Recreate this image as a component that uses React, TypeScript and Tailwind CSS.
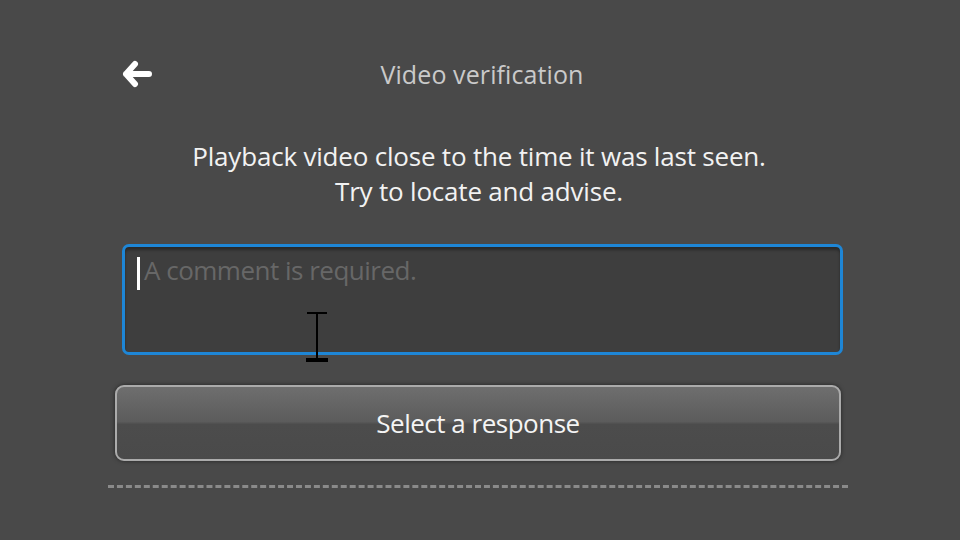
import { useState } from 'react';

function BackArrow() {
    return (
        <svg width="32" height="28" viewBox="0 0 32 28" fill="none">
            <path
                d="M14 4 L5 14 L14 24 M5 14 H28"
                stroke="#ffffff"
                strokeWidth="6"
                strokeLinecap="round"
                strokeLinejoin="round"
            />
        </svg>
    )
}

function IBeam() {
    return (
        <svg width="28" height="54" viewBox="0 0 28 54" className="absolute left-[303px] top-[310px] pointer-events-none">
            <path d="M4 3 H24 M14 3 V50" stroke="#000" strokeWidth="2" />
            <path d="M3 50 H25" stroke="#000" strokeWidth="4" />
        </svg>
    )
}

export default function App() {
    const [comment, setComment] = useState('')

    return (
        <div className="relative w-[960px] h-[540px] bg-[#494949] font-['Open_Sans',sans-serif] overflow-hidden">
            <div className="flex items-center h-[30px] mt-[59px] ml-[121px] w-[720px]">
                <button className="w-[32px] h-[28px] flex items-center justify-center">
                    <BackArrow />
                </button>
                <h1 className="flex-1 text-center text-[25px] leading-[30px] text-[#cacaca] pr-[30px] tracking-[0.1px]">Video verification</h1>
            </div>

            <p className="mt-[50px] text-center text-[26px] leading-[35px] text-[#f2f2f2] tracking-[-0.2px] pr-[2px]">
                Playback video close to the time it was last seen.<br />
                Try to locate and advise.
            </p>

            <div className="mt-[35px] ml-[122px] w-[721px] h-[111px] rounded-[7px] border-[3px] border-[#1e86d6] bg-[#3e3e3e] shadow-[inset_0_3px_3px_rgba(0,0,0,0.35)] relative">
                <span className="absolute left-[12px] top-[10px] w-[3px] h-[33px] bg-white"></span>
                <textarea
                    className="w-full h-full bg-transparent resize-none outline-none pl-[19px] pt-[5px] text-[26px] leading-[36px] text-[#ddd] placeholder:text-[#676767] tracking-[-0.5px]"
                    placeholder="A comment is required."
                    value={comment}
                    onChange={(e) => setComment(e.target.value)}
                />
            </div>

            <button className="block mt-[30px] ml-[115px] w-[726px] h-[76px] rounded-[9px] border-2 border-[#ababab] bg-[linear-gradient(to_bottom,#6e6e6e_0%,#5c5c5c_48%,#4c4c4c_52%,#4a4a4a_100%)] shadow-[0_0_4px_rgba(0,0,0,0.5)] text-[26px] text-[#f4f4f4] tracking-[-0.5px]">
                Select a response
            </button>

            <div className="mt-[24px] ml-[108px] w-[740px] border-t-[3px] border-dashed border-[#8a8a8a]"></div>

            <IBeam />
        </div>
    )
}
